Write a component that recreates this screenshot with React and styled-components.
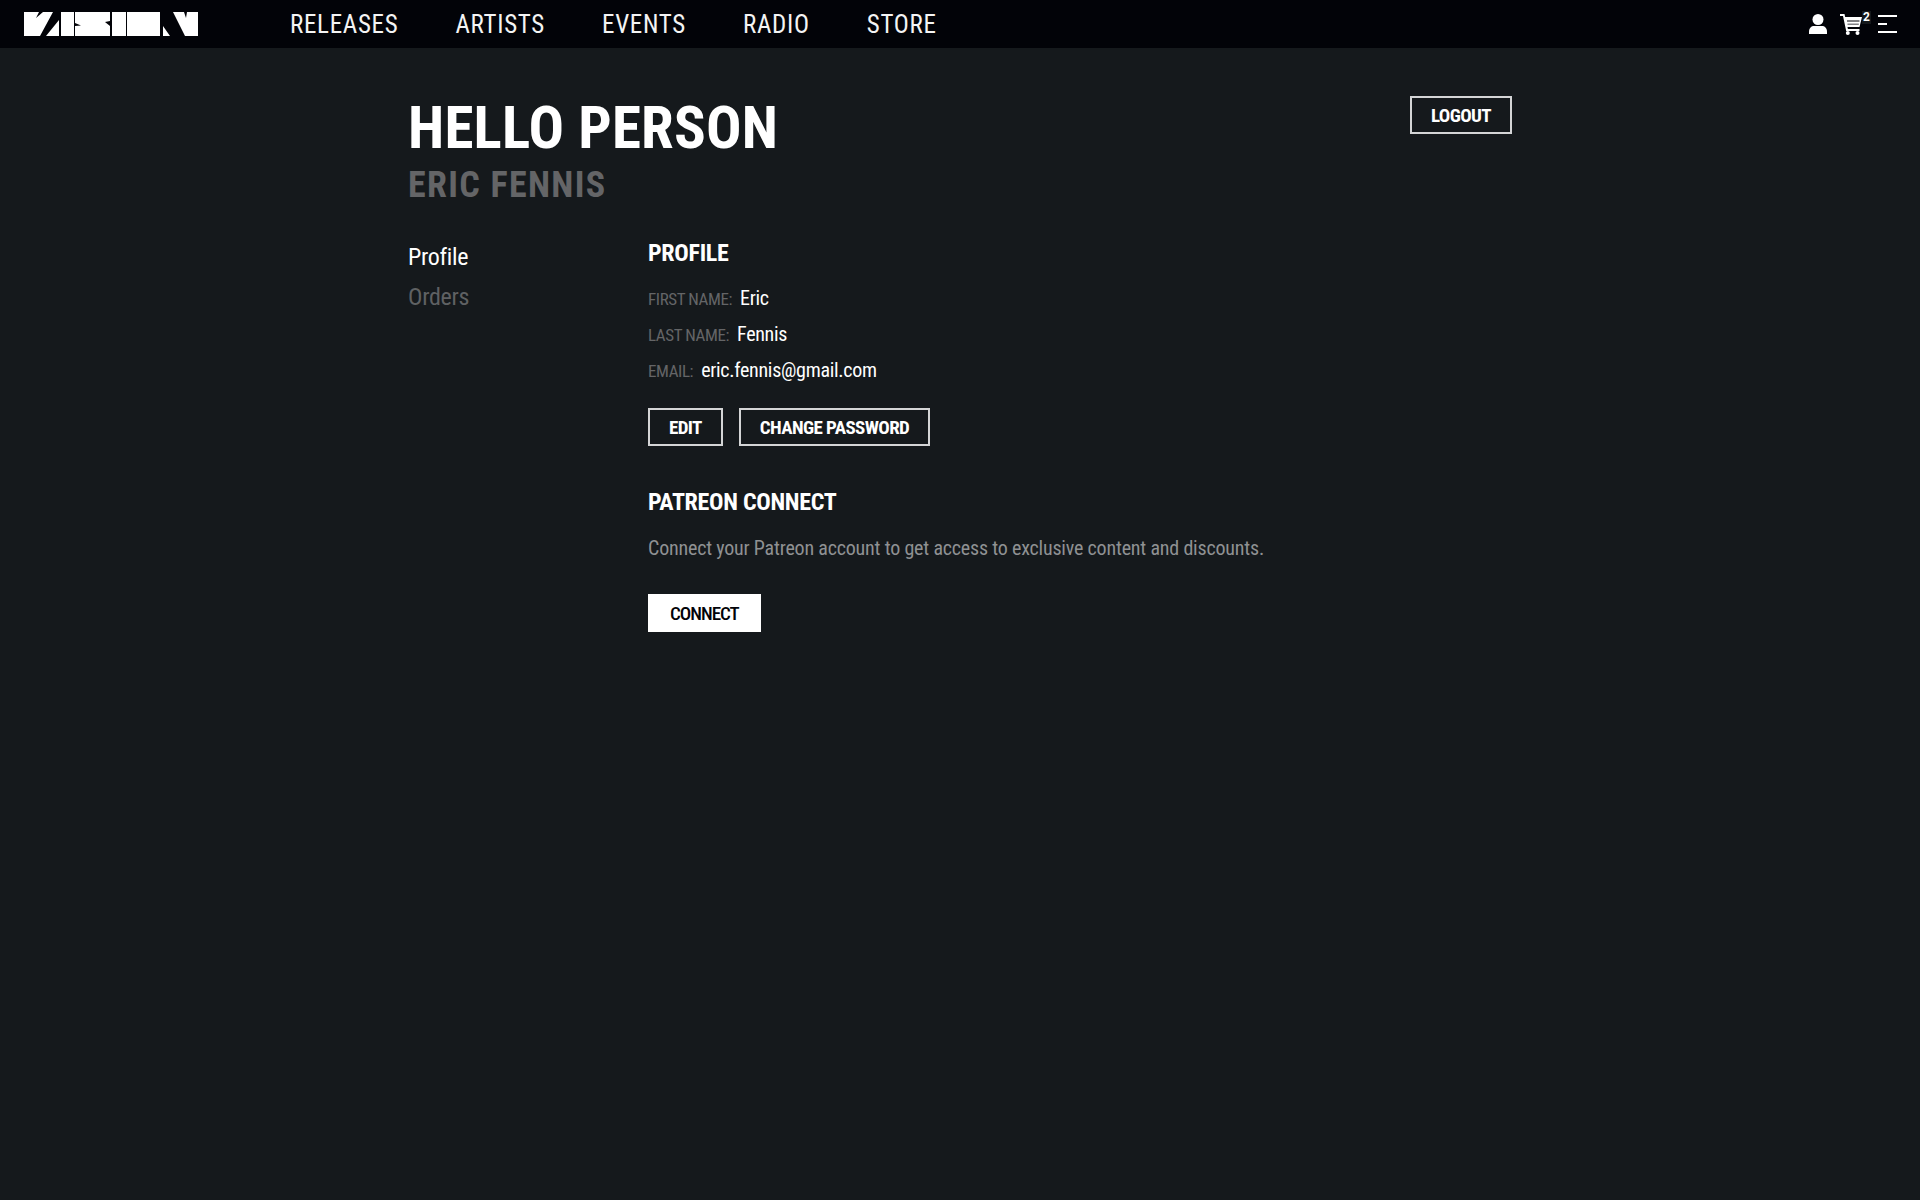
import styled, { createGlobalStyle } from 'styled-components';

const GlobalStyle = createGlobalStyle`
  html, body { margin: 0; padding: 0; background: #15191c; }
  * { box-sizing: border-box; }
`;

const Page = styled.div`
  min-height: 1200px;
  background: #15191c;
  color: #fff;
  font-family: Roboto, "Liberation Sans", sans-serif;
  font-stretch: 75%;
`;

const Header = styled.header`
  height: 48px;
  background: #020308;
  display: flex;
  align-items: center;
  padding: 0 23px 0 24px;
`;

const Logo = styled.svg`
  width: 174px;
  height: 24px;
  flex: none;
  display: block;
`;

const Nav = styled.nav`
  display: flex;
  gap: 57px;
  margin-left: 92px;
  padding-top: 1px;
`;

const NavLink = styled.a`
  font-size: 25px;
  letter-spacing: 0.7px;
  color: #f4f4f4;
  line-height: 47px;
`;

const Icons = styled.div`
  margin-left: auto;
  display: flex;
  align-items: center;
`;

const UserIcon = styled.svg`
  width: 18px;
  height: 20px;
  display: block;
`;

const CartWrap = styled.div`
  position: relative;
  display: flex;
  margin-left: 13px;
  margin-right: 16px;
`;

const CartIcon = styled.svg`
  width: 22px;
  height: 21px;
  display: block;
`;

const CartCount = styled.span`
  position: absolute;
  top: -3px;
  left: 22px;
  width: 9px;
  height: 13px;
  background: #15191c;
  text-align: center;
  font-size: 12px;
  line-height: 13px;
  font-weight: 700;
  font-stretch: 100%;
`;

const MenuIcon = styled.svg`
  width: 19px;
  height: 20px;
  display: block;
`;

const Main = styled.main`
  width: 1104px;
  margin-left: 408px;
`;

const TitleRow = styled.div`
  display: flex;
  justify-content: space-between;
  align-items: flex-start;
  padding-top: 48px;
`;

const Title = styled.h1`
  margin: 0;
  font-size: 59px;
  line-height: 64px;
  font-weight: 700;
  letter-spacing: 0.2px;
`;

const SubTitle = styled.h2`
  margin: 5px 0 0;
  font-size: 36px;
  line-height: 40px;
  font-weight: 700;
  letter-spacing: 1.3px;
  color: #646567;
`;

const Columns = styled.div`
  display: flex;
  margin-top: 34px;
`;

const Side = styled.aside`
  width: 240px;
  flex: none;
  display: flex;
  flex-direction: column;
  gap: 12px;
  padding-top: 4px;
`;

const SideLink = styled.a`
  font-size: 24px;
  line-height: 28px;
  letter-spacing: -0.3px;
  color: ${(p) => (p.$active ? '#fff' : '#5f6163')};
`;

const Content = styled.section`
  flex: 1;
`;

const SectionTitle = styled.h3`
  margin: 0;
  font-size: 24px;
  line-height: 28px;
  font-weight: 700;
  letter-spacing: -0.3px;
`;

const Fields = styled.div`
  display: flex;
  flex-direction: column;
  gap: 12px;
  margin-top: 19px;
`;

const Field = styled.div`
  display: flex;
  align-items: baseline;
  gap: 8px;
  height: 24px;
  line-height: 24px;
`;

const FieldLabel = styled.span`
  font-size: 17px;
  letter-spacing: -0.4px;
  color: #646567;
`;

const FieldValue = styled.span`
  font-size: 20px;
  letter-spacing: -0.3px;
  color: #fff;
`;

const Buttons = styled.div`
  display: flex;
  gap: 16px;
  margin-top: 26px;
`;

const Button = styled.button`
  height: 38px;
  padding: 0 ${(p) => (p.$filled ? '20px' : '19px')};
  font-family: inherit;
  font-stretch: inherit;
  font-size: 19px;
  letter-spacing: ${(p) => (p.$filled ? '-1px' : '-0.6px')};
  font-weight: ${(p) => (p.$filled ? 500 : 700)};
  border: 2px solid ${(p) => (p.$filled ? '#fff' : '#d4d5d6')};
  border-radius: 0;
  background: ${(p) => (p.$filled ? '#fff' : 'transparent')};
  color: ${(p) => (p.$filled ? '#020308' : '#fff')};
`;

const PatreonTitle = styled(SectionTitle)`
  margin-top: 42px;
`;

const Note = styled.p`
  margin: 20px 0 0;
  font-size: 20px;
  line-height: 24px;
  letter-spacing: -0.2px;
  color: #8f9193;
`;

const ConnectRow = styled.div`
  margin-top: 34px;
`;

const App = () => {
  return (
    <Page>
      <GlobalStyle />
      <Header>
        <Logo viewBox="0 0 174 24" aria-label="Vision">
          <path fill="#fff" d="M0 0H15L12 6L19 0H29L16 24H0ZM22 24L35 8V24ZM37 0H50V24H37ZM51 0H86V9L81 10L86 14V24H51V14L57 13.500L51 11ZM88 0H102V24H88ZM103 0H136V24H103ZM139 14V24H146ZM149 0H160L162 6L163 0H174V24H161Z" />
        </Logo>
        <Nav>
          <NavLink>RELEASES</NavLink>
          <NavLink>ARTISTS</NavLink>
          <NavLink>EVENTS</NavLink>
          <NavLink>RADIO</NavLink>
          <NavLink>STORE</NavLink>
        </Nav>
        <Icons>
          <UserIcon viewBox="0 0 18 20" fill="#fff">
            <circle cx="9" cy="5.500" r="5.500" />
            <path d="M0 20V17.500C0 14 2.500 12 5 12H13C15.500 12 18 14 18 17.500V20Z" />
          </UserIcon>
          <CartWrap>
            <CartIcon viewBox="0 0 22 21" fill="#fff">
              <path d="M0 0H4.500L5.200 3H22L19.500 13H7.500L7.900 15H19.500V17H6.200L3 2H0Z" />
              <path fill="#020308" d="M7 6.500H19.500V7.500H7ZM7.500 9.800H18.800V10.600H7.500Z" />
              <circle cx="7.800" cy="19" r="2" />
              <circle cx="17.500" cy="19" r="2" />
            </CartIcon>
            <CartCount>2</CartCount>
          </CartWrap>
          <MenuIcon viewBox="0 0 19 20" fill="#fff">
            <rect y="1" width="19" height="2" />
            <rect y="9" width="9" height="2" />
            <rect y="17" width="19" height="2" />
          </MenuIcon>
        </Icons>
      </Header>
      <Main>
        <TitleRow>
          <div>
            <Title>HELLO PERSON</Title>
            <SubTitle>ERIC FENNIS</SubTitle>
          </div>
          <Button>LOGOUT</Button>
        </TitleRow>
        <Columns>
          <Side>
            <SideLink $active>Profile</SideLink>
            <SideLink>Orders</SideLink>
          </Side>
          <Content>
            <SectionTitle>PROFILE</SectionTitle>
            <Fields>
              <Field><FieldLabel>FIRST NAME:</FieldLabel><FieldValue>Eric</FieldValue></Field>
              <Field><FieldLabel>LAST NAME:</FieldLabel><FieldValue>Fennis</FieldValue></Field>
              <Field><FieldLabel>EMAIL:</FieldLabel><FieldValue>eric.fennis@gmail.com</FieldValue></Field>
            </Fields>
            <Buttons>
              <Button>EDIT</Button>
              <Button>CHANGE PASSWORD</Button>
            </Buttons>
            <PatreonTitle>PATREON CONNECT</PatreonTitle>
            <Note>Connect your Patreon account to get access to exclusive content and discounts.</Note>
            <ConnectRow><Button $filled>CONNECT</Button></ConnectRow>
          </Content>
        </Columns>
      </Main>
    </Page>
  );
};

export default App;
